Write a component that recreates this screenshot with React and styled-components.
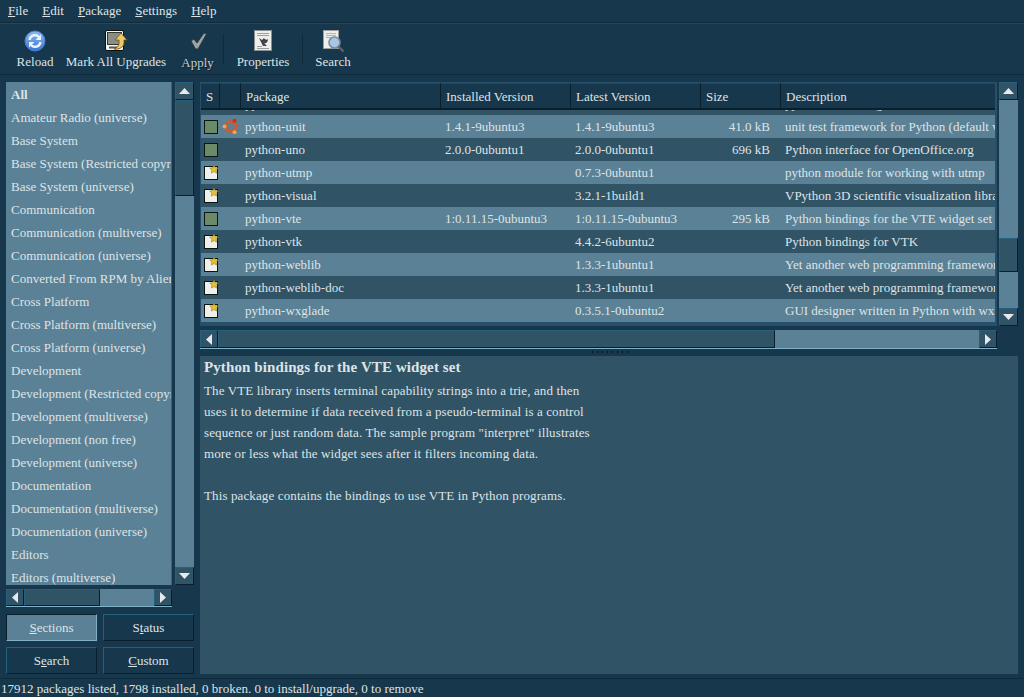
import React from "react";
import styled, { createGlobalStyle } from "styled-components";

const Global = createGlobalStyle`
  html, body { margin: 0; padding: 0; height: 100%; background: #17374c; overflow: hidden; }
  #root { height: 100%; }
`;

const COLS = "19px 21px 200px 130px 130px 80px 1fr";
const LIGHT = "#5a8196";
const DARK = "#305366";
const EDGE = "#26607f";
const TEXT = "#dfe4e6";

const Window = styled.div`
  width: 1024px;
  height: 697px;
  display: flex;
  flex-direction: column;
  background: #17374c;
  color: ${TEXT};
  font-family: "Liberation Serif", serif;
  font-size: 13px;
  overflow: hidden;
`;

const MenuBar = styled.div`
  height: 23px;
  box-sizing: border-box;
  display: flex;
  align-items: center;
  gap: 14px;
  padding: 0 0 1px 8px;
  border-bottom: 1px solid #0f2a3a;
`;

const MenuItem = styled.span`
  &::first-letter { text-decoration: underline; }
`;

const ToolBar = styled.div`
  height: 52px;
  box-sizing: border-box;
  display: flex;
  align-items: stretch;
  padding-left: 10px;
  border-bottom: 1px solid #0f2a3a;
  border-top: 1px solid #1f4a63;
`;

const Tool = styled.div`
  width: ${(p) => p.$w}px;
  display: flex;
  flex-direction: column;
  align-items: center;
  justify-content: flex-start;
  padding-top: 6px;
  color: ${(p) => (p.$muted ? "#c4ced3" : TEXT)};
  text-shadow: ${(p) => (p.$muted ? "1px 1px 0 #0a1a24" : "none")};
  svg { display: block; height: 22px; width: 24px; margin-bottom: ${(p) => (p.$muted ? 3 : 2)}px; }
`;

const ToolSep = styled.div`
  width: 1px;
  margin: 10px 0 9px;
  background: #0f2a3a;
`;

const Main = styled.div`
  flex: 1;
  min-height: 0;
  display: flex;
  padding: 7px 6px 4px 6px;
  gap: 6px;
`;

const LeftPane = styled.div`
  width: 188px;
  display: flex;
  flex-direction: column;
`;

const ListRow = styled.div`
  height: 503px;
  display: flex;
  gap: 3px;
`;

const Sections = styled.div`
  width: 166px;
  background: ${LIGHT};
  padding-top: 1px;
  overflow: hidden;
  border-right: 1px solid #3a6478;
  box-sizing: border-box;
`;

const Section = styled.div`
  height: 23px;
  line-height: 23px;
  padding-left: 5px;
  white-space: nowrap;
  font-weight: ${(p) => (p.$bold ? 700 : 400)};
`;

const VScroll = styled.div`
  width: 19px;
  display: flex;
  flex-direction: column;
  background: ${LIGHT};
`;

const Arrow = styled.div`
  flex: none;
  box-sizing: border-box;
  display: flex;
  align-items: center;
  justify-content: center;
  background: #305366;
  border: 1px solid;
  border-color: ${EDGE} #0b1e2b #0b1e2b ${EDGE};
  width: ${(p) => (p.$h ? "18px" : "100%")};
  height: ${(p) => (p.$h ? "100%" : "18px")};
  svg { display: block; }
`;

const Thumb = styled.div`
  box-sizing: border-box;
  flex: ${(p) => (p.$size ? `0 0 ${p.$size}px` : "1")};
  background: ${DARK};
  border: 1px solid;
  border-color: ${EDGE} #0b1e2b #0b1e2b ${EDGE};
`;

const Gutter = styled.div`
  flex: ${(p) => (p.$size ? `0 0 ${p.$size}px` : "1")};
  background: ${LIGHT};
`;

const HScroll = styled.div`
  height: ${(p) => p.$height}px;
  display: flex;
  background: ${LIGHT};
  border-bottom: 1px solid #7fb0c8;
  box-sizing: border-box;
  margin-top: 4px;
  width: ${(p) => p.$w}px;
`;

const ButtonGrid = styled.div`
  margin-top: 7px;
  display: grid;
  grid-template-columns: 91px 91px;
  grid-auto-rows: 27px;
  gap: 6px;
`;

const Button = styled.div`
  box-sizing: border-box;
  display: flex;
  align-items: center;
  justify-content: center;
  border: 1px solid;
  background: ${(p) => (p.$on ? LIGHT : "#17374c")};
  border-color: ${(p) =>
    p.$on ? "#0b1e2b #7fb0c8 #7fb0c8 #0b1e2b" : `${EDGE} #0b1e2b #0b1e2b ${EDGE}`};
  u { text-underline-offset: 1px; }
`;

const RightPane = styled.div`
  flex: 1;
  min-width: 0;
  display: flex;
  flex-direction: column;
`;

const TopArea = styled.div`
  height: 244px;
  display: flex;
  gap: 2px;
`;

const TableWrap = styled.div`
  width: 797px;
  display: flex;
  flex-direction: column;
  box-sizing: border-box;
  border: 1px solid #26506a;
  border-bottom-width: 4px;
  border-right-width: 2px;
  background: ${LIGHT};
  overflow: hidden;
`;

const HeaderRow = styled.div`
  flex: none;
  height: 27px;
  display: grid;
  grid-template-columns: ${COLS};
  background: #17374c;
  border-bottom: 2px solid #0b1e2b;
  box-sizing: border-box;
`;

const HeaderCell = styled.div`
  display: flex;
  align-items: center;
  padding-left: 5px;
  padding-top: 1px;
  border-right: 1px solid #0b1e2b;
  border-top: 1px solid #1f4a63;
  overflow: hidden;
  &:last-child { border-right: none; }
`;

const Rows = styled.div`
  flex: 1;
  min-height: 0;
  overflow: hidden;
`;

const Row = styled.div`
  height: 23px;
  display: grid;
  grid-template-columns: ${COLS};
  align-items: center;
  white-space: nowrap;
  background: ${(p) => (p.$odd ? LIGHT : DARK)};
  margin-top: ${(p) => p.$top || 0}px;
`;

const Cell = styled.div`
  padding-left: ${(p) => p.$pad ?? 4}px;
  overflow: hidden;
  text-align: ${(p) => (p.$right ? "right" : "left")};
  padding-right: ${(p) => (p.$right ? "11px" : 0)};
  svg { display: block; }
`;

const Splitter = styled.div`
  height: 6px;
  display: flex;
  align-items: center;
  justify-content: center;
  gap: 2px;
`;

const Grip = styled.i`
  width: 1px;
  height: 2px;
  background: #05131c;
  margin-left: 2px;
`;

const Detail = styled.div`
  flex: 1;
  min-height: 0;
  background: ${DARK};
  padding: 2px 4px;
  line-height: 21px;
  border-top: 1px solid #17374c;
`;

const DetailTitle = styled.div`
  font-size: 15px;
  letter-spacing: 0.1px;
  font-weight: 700;
  line-height: 19px;
  height: 22px;
`;

const DetailLine = styled.div`
  height: 21px;
  white-space: nowrap;
  letter-spacing: 0.12px;
`;

const StatusBar = styled.div`
  height: 19px;
  line-height: 20px;
  padding-left: 1px;
  box-sizing: border-box;
  border-top: 1px solid #0f2a3a;
  background: #17374c;
`;

const TriUp = () => (
  <svg width="11" height="6" viewBox="0 0 11 6"><path d="M5.5 0L11 6H0z" fill="#e6eaec" /></svg>
);
const TriDown = () => (
  <svg width="11" height="6" viewBox="0 0 11 6"><path d="M0 0H11L5.5 6z" fill="#e6eaec" /></svg>
);
const TriLeft = () => (
  <svg width="6" height="11" viewBox="0 0 6 11"><path d="M6 0V11L0 5.5z" fill="#e6eaec" /></svg>
);
const TriRight = () => (
  <svg width="6" height="11" viewBox="0 0 6 11"><path d="M0 0V11L6 5.5z" fill="#e6eaec" /></svg>
);

const ReloadIcon = () => (
  <svg viewBox="0 0 24 22">
    <defs>
      <linearGradient id="rl" x1="0" y1="0" x2="0" y2="1">
        <stop offset="0" stopColor="#8dbcf0" />
        <stop offset="1" stopColor="#3a74d6" />
      </linearGradient>
    </defs>
    <circle cx="12" cy="11" r="10" fill="url(#rl)" stroke="#4b7fd0" />
    <path d="M6.5 10a5.5 5.5 0 0 1 9.500-3" fill="none" stroke="#eef4fb" strokeWidth="2.400" />
    <path d="M18 4.500v5.500h-5.500z" fill="#eef4fb" />
    <path d="M17.500 12a5.500 5.500 0 0 1-9.500 3" fill="none" stroke="#eef4fb" strokeWidth="2.400" />
    <path d="M6 17.500v-5.500h5.500z" fill="#eef4fb" />
  </svg>
);

const UpgradeIcon = () => (
  <svg viewBox="0 0 24 22">
    <rect x="1.500" y="0.500" width="18" height="20" rx="1.500" fill="#f4f4f0" stroke="#0c0c0c" />
    <rect x="3.500" y="2.500" width="14" height="12" fill="#8a8d86" stroke="#33352f" />
    <rect x="5" y="16.500" width="11" height="2" fill="#55574f" />
    <path d="M17 3l6 7h-3v3c0 4-5 7-10 6 3-1 5-3 5-6v-3h-4z" fill="#edc765" stroke="#6d5114" strokeWidth="0.800" />
  </svg>
);

const CheckIcon = () => (
  <svg viewBox="0 0 24 22">
    <path d="M5 11l3-2 3 4 7-10 2.500 1-8.500 15h-2.500z" fill="#9aa3a5" stroke="#2f3b40" strokeWidth="1" />
  </svg>
);

const PropsIcon = () => (
  <svg viewBox="0 0 24 22">
    <rect x="3.500" y="0.500" width="17" height="20" fill="#eeeeea" stroke="#8a8f90" />
    <path d="M6 3.500h12M6 5.500h12M6 16.500h5M6 18.500h12" stroke="#9a9e9e" />
    <path d="M8 8l3 2 2-2c1 2 3 2 4 1 0 3-2 5-4 4l3 3h-4l-2-4z" fill="#3f444b" />
  </svg>
);

const SearchIcon = () => (
  <svg viewBox="0 0 24 22">
    <rect x="2.500" y="0.500" width="15" height="18" fill="#eeeeea" stroke="#9a9e9e" />
    <path d="M5 3.500h10M5 5.500h10M5 7.500h5" stroke="#b0b4b4" />
    <circle cx="13.500" cy="12.500" r="5.500" fill="#a8c6e8" stroke="#7d8a96" strokeWidth="1.600" />
    <path d="M17.500 16.500l5 5" stroke="#5e6368" strokeWidth="2.400" />
  </svg>
);

const Installed = () => (
  <svg width="14" height="14" viewBox="0 0 14 14">
    <rect x="0.500" y="0.500" width="13" height="13" fill="#6a8a68" stroke="#0b1612" />
  </svg>
);

const NewPkg = () => (
  <svg width="15" height="15" viewBox="0 0 15 15">
    <rect x="0.500" y="1.500" width="13" height="13" fill="#efefec" stroke="#0b1612" />
    <path d="M10 0l1.300 2.700 3 .4-2.200 2 .6 3-2.700-1.500-2.700 1.500.6-3-2.200-2 3-.4z" fill="#e6c22e" stroke="#8a6d10" strokeWidth="0.500" />
  </svg>
);

const UbuntuMark = () => (
  <svg width="17" height="17" viewBox="0 0 17 17">
    <circle cx="9" cy="8.500" r="5" fill="none" stroke="#e4541c" strokeWidth="2.400" />
    <circle cx="2.500" cy="8.500" r="2" fill="#f3a34f" />
    <circle cx="12.500" cy="2.700" r="2" fill="#d82a1a" />
    <circle cx="12.500" cy="14.300" r="2" fill="#f3a34f" />
  </svg>
);

const sectionNames = [
  "Amateur Radio (universe)",
  "Base System",
  "Base System (Restricted copyright)",
  "Base System (universe)",
  "Communication",
  "Communication (multiverse)",
  "Communication (universe)",
  "Converted From RPM by Alien",
  "Cross Platform",
  "Cross Platform (multiverse)",
  "Cross Platform (universe)",
  "Development",
  "Development (Restricted copyright)",
  "Development (multiverse)",
  "Development (non free)",
  "Development (universe)",
  "Documentation",
  "Documentation (multiverse)",
  "Documentation (universe)",
  "Editors",
  "Editors (multiverse)",
];

const packages = [
  { s: "inst", logo: true, n: "python-unit", i: "1.4.1-9ubuntu3", l: "1.4.1-9ubuntu3", z: "41.0 kB", d: "unit test framework for Python (default version)" },
  { s: "inst", n: "python-uno", i: "2.0.0-0ubuntu1", l: "2.0.0-0ubuntu1", z: "696 kB", d: "Python interface for OpenOffice.org" },
  { s: "new", n: "python-utmp", l: "0.7.3-0ubuntu1", d: "python module for working with utmp" },
  { s: "new", n: "python-visual", l: "3.2.1-1build1", d: "VPython 3D scientific visualization library" },
  { s: "inst", n: "python-vte", i: "1:0.11.15-0ubuntu3", l: "1:0.11.15-0ubuntu3", z: "295 kB", d: "Python bindings for the VTE widget set" },
  { s: "new", n: "python-vtk", l: "4.4.2-6ubuntu2", d: "Python bindings for VTK" },
  { s: "new", n: "python-weblib", l: "1.3.3-1ubuntu1", d: "Yet another web programming framework" },
  { s: "new", n: "python-weblib-doc", l: "1.3.3-1ubuntu1", d: "Yet another web programming framework" },
  { s: "new", n: "python-wxglade", l: "0.3.5.1-0ubuntu2", d: "GUI designer written in Python with wxPython" },
];

const detailLines = [
  "The VTE library inserts terminal capability strings into a trie, and then",
  "uses it to determine if data received from a pseudo-terminal is a control",
  "sequence or just random data. The sample program \"interpret\" illustrates",
  "more or less what the widget sees after it filters incoming data.",
  "\u00a0",
  "This package contains the bindings to use VTE in Python programs.",
];

export default function App() {
  return (
    <Window>
      <Global />
      <MenuBar>
        {["File", "Edit", "Package", "Settings", "Help"].map((m) => (
          <MenuItem key={m}>{m}</MenuItem>
        ))}
      </MenuBar>
      <ToolBar>
        <Tool $w={50}><ReloadIcon />Reload</Tool>
        <Tool $w={112}><UpgradeIcon />Mark All Upgrades</Tool>
        <Tool $w={51} $muted><CheckIcon />Apply</Tool>
        <ToolSep />
        <Tool $w={78}><PropsIcon />Properties</Tool>
        <ToolSep />
        <Tool $w={60}><SearchIcon />Search</Tool>
      </ToolBar>
      <Main>
        <LeftPane>
          <ListRow>
            <Sections>
              <Section $bold>All</Section>
              {sectionNames.map((s) => (
                <Section key={s}>{s}</Section>
              ))}
            </Sections>
            <VScroll>
              <Arrow><TriUp /></Arrow>
              <Thumb $size={96} />
              <Gutter />
              <Arrow><TriDown /></Arrow>
            </VScroll>
          </ListRow>
          <HScroll $height={18} $w={166}>
            <Arrow $h><TriLeft /></Arrow>
            <Thumb $size={76} />
            <Gutter />
            <Arrow $h><TriRight /></Arrow>
          </HScroll>
          <ButtonGrid>
            <Button $on><span><u>S</u>ections</span></Button>
            <Button><span>S<u>t</u>atus</span></Button>
            <Button><span>S<u>e</u>arch</span></Button>
            <Button><span><u>C</u>ustom</span></Button>
          </ButtonGrid>
        </LeftPane>
        <RightPane>
          <TopArea>
            <TableWrap>
              <HeaderRow>
                <HeaderCell>S</HeaderCell>
                <HeaderCell />
                <HeaderCell>Package</HeaderCell>
                <HeaderCell>Installed Version</HeaderCell>
                <HeaderCell>Latest Version</HeaderCell>
                <HeaderCell>Size</HeaderCell>
                <HeaderCell>Description</HeaderCell>
              </HeaderRow>
              <Rows>
                <Row $top={-18}>
                  <Cell /><Cell /><Cell>python-unit-doc</Cell><Cell /><Cell /><Cell />
                  <Cell>python unit testing</Cell>
                </Row>
                {packages.map((p, i) => (
                  <Row key={p.n} $odd={i % 2 === 0}>
                    <Cell $pad={3}>{p.s === "inst" ? <Installed /> : <NewPkg />}</Cell>
                    <Cell $pad={2}>{p.logo && <UbuntuMark />}</Cell>
                    <Cell>{p.n}</Cell>
                    <Cell>{p.i}</Cell>
                    <Cell>{p.l}</Cell>
                    <Cell $right>{p.z}</Cell>
                    <Cell>{p.d}</Cell>
                  </Row>
                ))}
              </Rows>
            </TableWrap>
            <VScroll>
              <Arrow><TriUp /></Arrow>
              <Gutter $size={138} />
              <Thumb $size={34} />
              <Gutter />
              <Arrow><TriDown /></Arrow>
            </VScroll>
          </TopArea>
          <HScroll $height={19} $w={797}>
            <Arrow $h><TriLeft /></Arrow>
            <Thumb $size={557} />
            <Gutter />
            <Arrow $h><TriRight /></Arrow>
          </HScroll>
          <Splitter>
            {Array.from({ length: 8 }).map((_, i) => (
              <Grip key={i} />
            ))}
          </Splitter>
          <Detail>
            <DetailTitle>Python bindings for the VTE widget set</DetailTitle>
            {detailLines.map((l, i) => (
              <DetailLine key={i}>{l}</DetailLine>
            ))}
          </Detail>
        </RightPane>
      </Main>
      <StatusBar>17912 packages listed, 1798 installed, 0 broken. 0 to install/upgrade, 0 to remove</StatusBar>
    </Window>
  );
}
